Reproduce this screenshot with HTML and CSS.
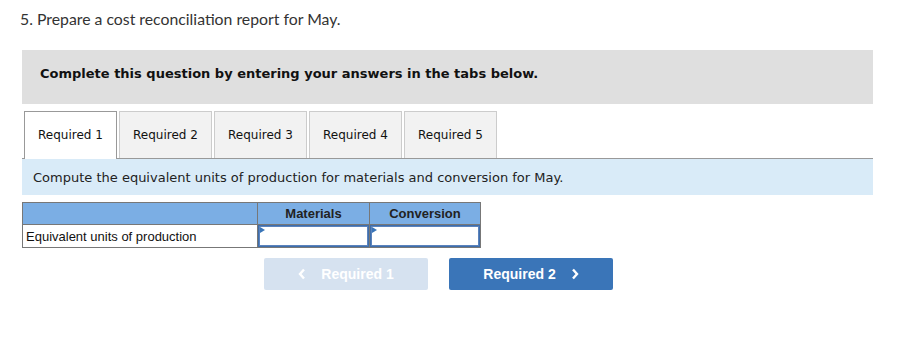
FILE: index.html
```html
<!DOCTYPE html>
<html>
<head>
<meta charset="utf-8">
<link rel="stylesheet" href="styles.css">
</head>
<body>
<div class="page">
  <p class="q-title">5. Prepare a cost reconciliation report for May.</p>
  <div class="notice">Complete this question by entering your answers in the tabs below.</div>
  <div class="tabs">
    <div class="tab active">Required 1</div>
    <div class="tab">Required 2</div>
    <div class="tab">Required 3</div>
    <div class="tab">Required 4</div>
    <div class="tab">Required 5</div>
  </div>
  <div class="instr">Compute the equivalent units of production for materials and conversion for May.</div>
  <table class="grid">
    <colgroup><col class="w1"><col class="w2"><col class="w3"></colgroup>
    <thead>
      <tr><th class="c-label"></th><th>Materials</th><th>Conversion</th></tr>
    </thead>
    <tbody>
      <tr>
        <td class="c-label">Equivalent units of production</td>
        <td class="c-input"><div class="inbox"><span class="flag"></span></div></td>
        <td class="c-input"><div class="inbox"><span class="flag"></span></div></td>
      </tr>
    </tbody>
  </table>
  <div class="nav">
    <div class="btn prev"><svg class="chev left" width="8" height="12" viewBox="0 0 8 12"><polyline points="6,1.5 2,6 6,10.5" fill="none" stroke="#fff" stroke-width="2.4"/></svg>Required 1</div>
    <div class="btn next">Required 2<svg class="chev right" width="8" height="12" viewBox="0 0 8 12"><polyline points="2,1.5 6,6 2,10.5" fill="none" stroke="#fff" stroke-width="2.4"/></svg></div>
  </div>
</div>
</body>
</html>
```
FILE: styles.css
```css
html, body { margin: 0; padding: 0; background: #fff; }
.page { padding: 0 32px 0 22px; width: 851px; }
.q-title {
  margin: 0 0 0 -2px;
  padding-top: 9px;
  height: 41px;
  font-family: Lato, "Open Sans", sans-serif;
  font-size: 15.8px;
  line-height: 20px;
  color: #333;
}
.notice {
  height: 54px;
  background: #dfdfdf;
  box-sizing: border-box;
  padding-left: 18px;
  padding-bottom: 8px;
  display: flex;
  align-items: center;
  font-family: "DejaVu Sans", Verdana, sans-serif;
  font-weight: bold;
  font-size: 13px;
  color: #111;
}
.tabs {
  margin-top: 7px;
  display: flex;
  gap: 2px;
  padding-left: 2px;
  border-bottom: 1px solid #999;
  height: 47px;
}
.tab {
  width: 93px;
  box-sizing: border-box;
  height: 47px;
  border: 1px solid #ccc;
  border-bottom: none;
  background: #f2f2f2;
  font-family: "DejaVu Sans", Verdana, sans-serif;
  font-size: 12px;
  color: #111;
  display: flex;
  align-items: center;
  justify-content: center;
  padding-bottom: 1px;
}
.tab.active {
  background: #fff;
  border-color: #999;
  height: 48px;
  position: relative;
  z-index: 1;
}
.instr {
  height: 36px;
  background: #d9ebf8;
  box-sizing: border-box;
  padding-left: 11px;
  display: flex;
  align-items: center;
  font-family: "DejaVu Sans", Verdana, sans-serif;
  font-size: 13px;
  color: #222;
}
.grid {
  margin-top: 7px;
  border-collapse: collapse;
  table-layout: fixed;
  width: 458px;
  font-family: "Liberation Sans", Arial, sans-serif;
  font-size: 13px;
}
.grid col.w1 { width: 235px; }
.grid col.w2 { width: 112px; }
.grid col.w3 { width: 111px; }
.grid th, .grid td {
  border: 1px solid #777;
  padding: 0;
}
.grid th {
  background: #7baee4;
  height: 21px;
  font-weight: bold;
  color: #222;
  font-size: 13px;
}
.grid td { height: 22px; }
.grid td.c-label { padding-left: 3px; color: #111; white-space: nowrap; }
.inbox {
  height: 20px;
  border: 1px solid #3f6eab;
  box-shadow: inset 0 0 0 1px #5b83bd;
  position: relative;
}
.flag {
  position: absolute;
  left: 1px;
  top: 1px;
  width: 0; height: 0;
  border-top: 3px solid transparent;
  border-bottom: 3px solid transparent;
  border-left: 5px solid #3a75b8;
}
.nav {
  margin-top: 10px;
  margin-left: 242px;
  display: flex;
  gap: 21px;
}
.btn {
  width: 164px;
  height: 32px;
  border-radius: 2px;
  display: flex;
  align-items: center;
  justify-content: center;
  font-family: "Liberation Sans", Arial, sans-serif;
  font-weight: bold;
  font-size: 14px;
  color: #fff;
}
.btn.prev { background: #d6e2f0; }
.btn.next { background: #3a75b8; }
.chev.left { margin-right: 15px; }
.chev.right { margin-left: 15px; }
```
